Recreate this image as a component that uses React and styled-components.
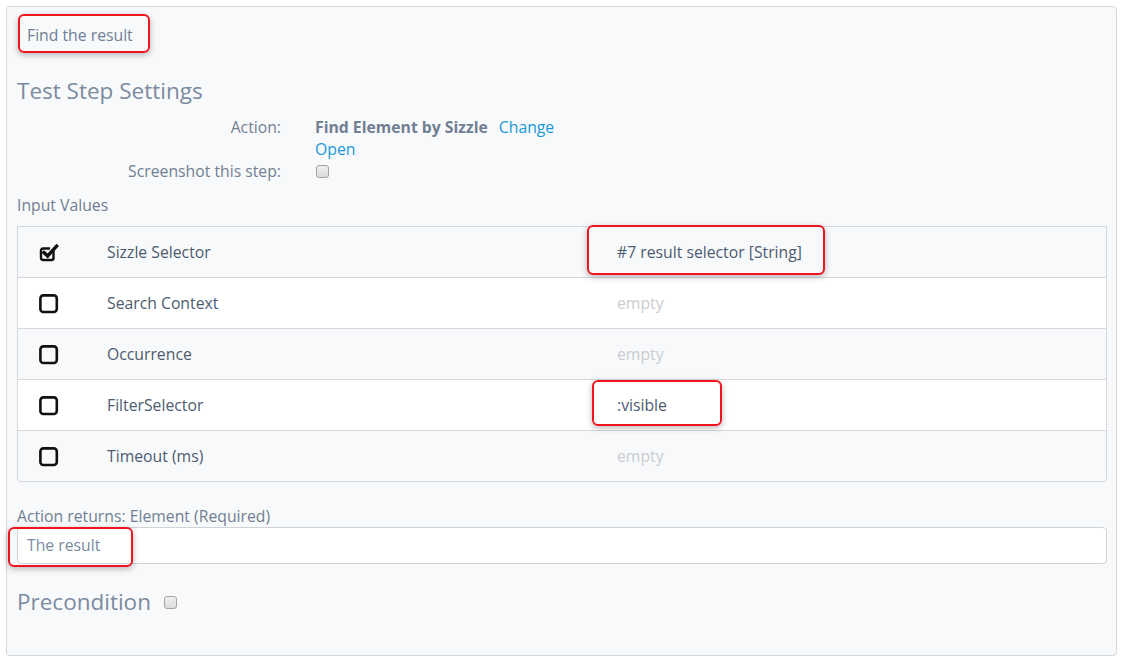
import React from "react";
import styled, { createGlobalStyle } from "styled-components";

const GlobalStyle = createGlobalStyle`
  html, body {
    margin: 0;
    padding: 0;
    background: #ffffff;
  }
  body {
    font-family: "Open Sans", "Liberation Sans", sans-serif;
    font-size: 15.75px;
    color: #6f7f95;
  }
  * {
    box-sizing: border-box;
  }
`;

const inputs = [
  { name: "Sizzle Selector", checked: true, value: "#7 result selector [String]", ring: { l: -30, r: -23, t: -16, b: -12 } },
  { name: "Search Context" },
  { name: "Occurrence" },
  { name: "FilterSelector", value: ":visible", ring: { l: -25, r: -55, t: -14, b: -10 } },
  { name: "Timeout (ms)" },
];

function SquareIcon({ checked }) {
  if (checked) {
    return (
      <svg width="21" height="22" viewBox="0 0 21 22" fill="none">
        <path
          d="M14.5 8.5 V17 a2 2 0 0 1 -2 2 H4 a2 2 0 0 1 -2 -2 V9.5 a2 2 0 0 1 2 -2 H11"
          stroke="#111"
          strokeWidth="2.4"
        />
        <path d="M5 11.6 L8.6 15 L17.6 5.2" stroke="#111" strokeWidth="3.4" strokeLinecap="square" />
      </svg>
    );
  }
  return (
    <svg width="21" height="22" viewBox="0 0 21 22" fill="none">
      <rect x="1.4" y="3.4" width="16.4" height="16.6" rx="3" stroke="#111" strokeWidth="2.6" />
    </svg>
  );
}

function App() {
  return (
    <>
      <GlobalStyle />
      <Page>
        <Panel>
          <StepName>
            <Marked>
              <Ring $l={-9} $r={-17} $t={-10} $b={-7} />
              Find the result
            </Marked>
          </StepName>

          <Heading>Test Step Settings</Heading>

          <SettingsGrid>
            <Label>Action:</Label>
            <Value>
              <Strong>Find Element by Sizzle</Strong>
              <Link>Change</Link>
              <Link $first>Open</Link>
            </Value>
            <Label>Screenshot this step:</Label>
            <Value>
              <MiniBox />
            </Value>
          </SettingsGrid>

          <SubLabel>Input Values</SubLabel>

          <Table>
            {inputs.map((row, i) => (
              <Row key={row.name} $striped={i % 2 === 0}>
                <CheckCell>
                  <SquareIcon checked={row.checked} />
                </CheckCell>
                <NameCell>{row.name}</NameCell>
                <ValueCell $empty={!row.value}>
                  {row.value ? (
                    <Marked>
                      <Ring $l={row.ring.l} $r={row.ring.r} $t={row.ring.t} $b={row.ring.b} />
                      {row.value}
                    </Marked>
                  ) : (
                    "empty"
                  )}
                </ValueCell>
              </Row>
            ))}
          </Table>

          <ReturnLabel>Action returns: Element (Required)</ReturnLabel>
          <ReturnField>
            <Ring $l={-10} $t={-1} $w={125} $h={40} />
            The result
          </ReturnField>

          <Precondition>
            Precondition
            <MiniBox />
          </Precondition>
        </Panel>
      </Page>
    </>
  );
}

const Page = styled.div`
  padding: 6px;
`;

const Panel = styled.div`
  height: 650px;
  border: 1px solid #d3d6da;
  border-radius: 4px;
  background: #f8f9fb;
  padding: 0 9px 0 10px;
`;

const StepName = styled.div`
  padding: 17px 0 0 10px;
  height: 51px;
  line-height: 22px;
`;

const Marked = styled.span`
  position: relative;
  display: inline-block;
`;

const Ring = styled.span`
  position: absolute;
  left: ${(p) => p.$l}px;
  top: ${(p) => p.$t}px;
  ${(p) => (p.$w ? `width: ${p.$w}px;` : `right: ${p.$r}px;`)}
  ${(p) => (p.$h ? `height: ${p.$h}px;` : `bottom: ${p.$b}px;`)}
  border: 2px solid #f0141e;
  border-radius: 6px;
  box-shadow: 0 2px 6px rgba(0, 0, 0, 0.28);
  pointer-events: none;
`;

const Heading = styled.h2`
  margin: 18px 0 0;
  font-size: 22.5px;
  font-weight: 400;
  line-height: 30px;
  color: #7b8ba0;
`;

const SettingsGrid = styled.div`
  display: grid;
  grid-template-columns: 264px 1fr;
  column-gap: 34px;
  margin-top: 10px;
  line-height: 22px;
`;

const Label = styled.div`
  text-align: right;
  color: #717f92;
`;

const Value = styled.div`
  display: flex;
  flex-wrap: wrap;
  align-items: center;
`;

const Strong = styled.span`
  font-weight: 700;
  color: #717f92;
`;

const Link = styled.span`
  color: #1a98d8;
  margin-left: ${(p) => (p.$first ? 0 : 11)}px;
  flex-basis: ${(p) => (p.$first ? "100%" : "auto")};
`;

const MiniBox = styled.span`
  display: inline-block;
  width: 13px;
  height: 13px;
  border: 1px solid #a3a3a3;
  border-radius: 3px;
  background: linear-gradient(#efefef, #dcdcdc);
  margin-left: 1px;
`;

const SubLabel = styled.div`
  margin-top: 12px;
  line-height: 22px;
  color: #717f92;
`;

const Table = styled.div`
  margin-top: 10px;
  border: 1px solid #d3d6da;
  border-radius: 0 0 4px 4px;
`;

const Row = styled.div`
  display: grid;
  grid-template-columns: 89px 510px 1fr;
  align-items: center;
  height: 51px;
  background: ${(p) => (p.$striped ? "#f8f9fb" : "#ffffff")};
  border-top: 1px solid #d6d8dc;
  color: #4c5b6f;

  &:first-child {
    border-top: none;
    height: 50px;
  }

  &:last-child {
    border-radius: 0 0 4px 4px;
  }
`;

const CheckCell = styled.div`
  display: flex;
  padding-left: 21px;
`;

const NameCell = styled.div``;

const ValueCell = styled.div`
  color: ${(p) => (p.$empty ? "#c9ccd1" : "#4c5b6f")};
`;

const ReturnLabel = styled.div`
  margin-top: 23px;
  line-height: 22px;
  color: #717f92;
`;

const ReturnField = styled.div`
  position: relative;
  height: 37px;
  border: 1px solid #cfd2d6;
  border-radius: 4px;
  background: #ffffff;
  padding-left: 9px;
  line-height: 35px;
  color: #7b8ba0;
`;

const Precondition = styled.h2`
  display: flex;
  align-items: center;
  gap: 12px;
  margin: 23px 0 0;
  font-size: 22.5px;
  font-weight: 400;
  line-height: 30px;
  color: #7b8ba0;
`;

export default App;
